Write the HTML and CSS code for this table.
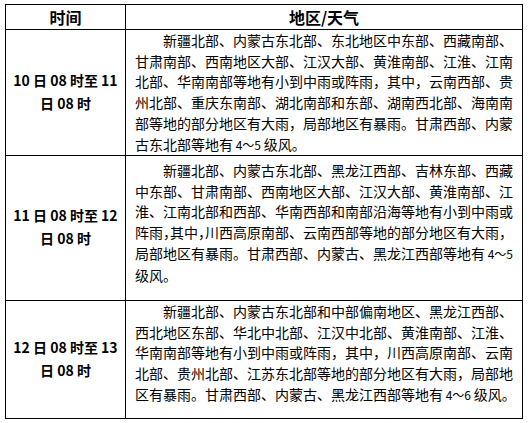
FILE: index.html
```html
<!DOCTYPE html>
<html lang="zh-CN">
<head>
<meta charset="utf-8">
<title>天气预报</title>
<link rel="stylesheet" href="styles.css">
</head>
<body>
<div class="sheet">
  <div class="cell head">时间</div>
  <div class="cell head">地区/天气</div>

  <div class="cell time">10 日 08 时至 11<br>日 08 时</div>
  <div class="cell area r1">
    <p class="ln first">新疆北部、内蒙古东北部、东北地区中东部、西藏南部、</p>
    <p class="ln">甘肃南部、西南地区大部、江汉大部、黄淮南部、江淮、江南</p>
    <p class="ln">北部、华南南部等地有小到中雨或阵雨，其中，云南西部、贵</p>
    <p class="ln">州北部、重庆东南部、湖北南部和东部、湖南西北部、海南南</p>
    <p class="ln">部等地的部分地区有大雨，局部地区有暴雨。甘肃西部、内蒙</p>
    <p class="ln end">古东北部等地有<span class="num"> 4～5 </span>级风。</p>
  </div>

  <div class="cell time">11 日 08 时至 12<br>日 08 时</div>
  <div class="cell area r2">
    <p class="ln first">新疆北部、内蒙古东北部、黑龙江西部、吉林东部、西藏</p>
    <p class="ln">中东部、甘肃南部、西南地区大部、江汉大部、黄淮南部、江</p>
    <p class="ln">淮、江南北部和西部、华南西部和南部沿海等地有小到中雨或</p>
    <p class="ln">阵雨<span class="half">，</span>其中<span class="half">，</span>川西高原南部、云南西部等地的部分地区有大雨，</p>
    <p class="ln">局部地区有暴雨。甘肃西部、内蒙古、黑龙江西部等地有<span class="num"> 4～5</span></p>
    <p class="ln end">级风。</p>
  </div>

  <div class="cell time">12 日 08 时至 13<br>日 08 时</div>
  <div class="cell area r3">
    <p class="ln first">新疆北部、内蒙古东北部和中部偏南地区、黑龙江西部、</p>
    <p class="ln">西北地区东部、华北中北部、江汉中北部、黄淮南部、江淮、</p>
    <p class="ln">华南南部等地有小到中雨或阵雨，其中，川西高原南部、云南</p>
    <p class="ln">北部、贵州北部、江苏东北部等地的部分地区有大雨，局部地</p>
    <p class="ln end">区有暴雨。甘肃西部、内蒙古、黑龙江西部等地有<span class="num"> 4～6 </span>级风。</p>
  </div>
</div>
</body>
</html>
```

FILE: styles.css
```css
html, body {
  margin: 0;
  padding: 0;
  background: #fff;
}

body {
  font-family: "Noto Sans CJK SC", "Noto Sans", sans-serif;
  color: #000;
}

.sheet {
  margin: 4px 0 0 5px;
  width: 518px;
  box-sizing: border-box;
  display: grid;
  grid-template-columns: 120px 397px;
  grid-template-rows: 25px 126px 145px 118px;
  border-left: 1px solid #000;
  border-top: 1px solid #000;
}

.cell {
  border-right: 1px solid #000;
  border-bottom: 1px solid #000;
  box-sizing: border-box;
  min-width: 0;
}

.head {
  display: flex;
  align-items: center;
  justify-content: center;
  font-size: 16px;
  font-weight: bold;
  line-height: 24px;
}

.time {
  display: flex;
  align-items: center;
  justify-content: center;
  text-align: center;
  font-size: 14px;
  font-weight: bold;
  line-height: 23px;
  padding-bottom: 2px;
}

.area {
  padding: 0 9px;
  font-size: 14px;
  line-height: 20.7px;
}

.area.r1 { padding-top: 0; }
.area.r2 { padding-top: 4px; }
.area.r3 { padding-top: 0; }

.ln {
  margin: 0;
  white-space: nowrap;
  text-align: justify;
  text-align-last: justify;
}

.ln.first {
  text-indent: 2em;
}

.ln.end {
  text-align-last: left;
}

.num {
  font-size: 12px;
}

.half {
  font-feature-settings: "halt";
}
```
